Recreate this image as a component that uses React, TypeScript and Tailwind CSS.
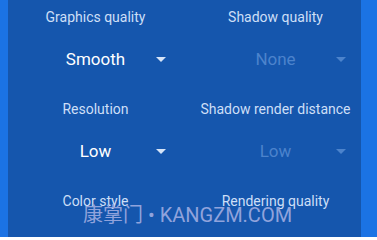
import React from "react";

type Setting = {
  label: string;
  value?: string;
  disabled?: boolean;
};

// settings grid, two columns (last row's values sit below the fold)
const settings: Setting[] = [
  { label: "Graphics quality", value: "Smooth" },
  { label: "Shadow quality", value: "None", disabled: true },
  { label: "Resolution", value: "Low" },
  { label: "Shadow render distance", value: "Low", disabled: true },
  { label: "Color style" },
  { label: "Rendering quality" },
];

function Dropdown({ value, disabled }: { value: string; disabled?: boolean }) {
  return (
    <div className="flex items-center w-[140px] h-6 mt-5">
      <span className="w-[10px]" />
      <span
        className={`flex-1 text-center text-[17px] leading-6 ${
          disabled ? "text-[#4c83cc]" : "text-white"
        }`}
      >
        {value}
      </span>
      <svg width="10" height="5" viewBox="0 0 10 5" className="shrink-0">
        <path d="M0 0 L10 0 L5 5 Z" fill={disabled ? "#4c83cc" : "#d6e4f8"} />
      </svg>
    </div>
  );
}

export default function App() {
  return (
    <div
      className="relative h-[237px] w-[377px] overflow-hidden bg-[#1b73e4]"
      style={{ fontFamily: "Roboto, 'Noto Sans', sans-serif" }}
    >
      <div className="ml-[8px] w-[353px] h-full bg-[#1556ad] pt-[7px]">
        <div className="grid grid-cols-[175px_175px] gap-x-[5px]">
          {settings.map((s) => (
            <div key={s.label} className="flex flex-col items-center h-[92px]">
              <span className="h-5 leading-5 text-[14px] text-[#cddff7] whitespace-nowrap">
                {s.label}
              </span>
              {s.value && <Dropdown value={s.value} disabled={s.disabled} />}
            </div>
          ))}
        </div>
      </div>
      {/* watermark overlay */}
      <div
        className="absolute left-[83px] top-[203px] text-[20px] leading-6 text-[#90a3dc] whitespace-nowrap"
        style={{ fontFamily: "Roboto, 'Noto Sans CJK SC', sans-serif" }}
      >
        康掌门 • KANGZM.COM
      </div>
    </div>
  );
}
